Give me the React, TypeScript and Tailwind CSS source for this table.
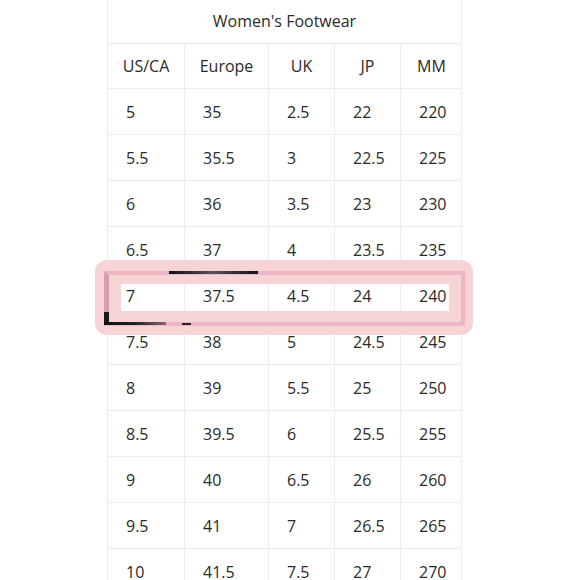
import React from 'react'

const headers = ['US/CA', 'Europe', 'UK', 'JP', 'MM']

const rows: string[][] = [
  ['5', '35', '2.5', '22', '220'],
  ['5.5', '35.5', '3', '22.5', '225'],
  ['6', '36', '3.5', '23', '230'],
  ['6.5', '37', '4', '23.5', '235'],
  ['7', '37.5', '4.5', '24', '240'],
  ['7.5', '38', '5', '24.5', '245'],
  ['8', '39', '5.5', '25', '250'],
  ['8.5', '39.5', '6', '25.5', '255'],
  ['9', '40', '6.5', '26', '260'],
  ['9.5', '41', '7', '26.5', '265'],
  ['10', '41.5', '7.5', '27', '270'],
]

const cols = 'grid grid-cols-[76px_84px_66px_66px_62px]'

// pink marker drawn over the size 7 row
const Highlight = () => (
  <div className="absolute z-10 -left-[13px] -top-[13px] w-[378px] h-[75px] pointer-events-none">
    <div className="absolute inset-0 rounded-[12px] border-solid border-[#f6d4d5] border-l-[26px] border-r-[24px] border-t-[24px] border-b-[24px]" />
    <div className="absolute left-[9px] top-[11px] w-[361px] h-[55px] border-[4px] border-l-[5px] border-[#eeb5c6] border-l-[#d99cb0]" />
    <div className="absolute left-[74px] top-[11px] w-[89px] h-[3px] bg-gradient-to-r from-[#111] via-[#555] to-[#111]" />
    <div className="absolute left-[9px] top-[52px] w-[5px] h-[13px] bg-[#1a1a1a]" />
    <div className="absolute left-[9px] top-[62px] w-[62px] h-[3px] bg-gradient-to-r from-[#111] via-[#222] to-[#8a6a70]" />
    <div className="absolute left-[87px] top-[63px] w-[9px] h-[2px] bg-[#2a2020]" />
  </div>
)

export default function App() {
  return (
    <div className="w-[580px] h-[580px] overflow-hidden bg-white text-[#2a2a2a] text-[16px] font-['Open_Sans',sans-serif]">
      <div className="pl-[107px]">
        <div className="w-[355px] border-x border-[#ececec]">
          <div className="h-[44px] flex items-center justify-center border-b border-[#ececec] pb-[2px]">
            Women's Footwear
          </div>
          <div className={`${cols} h-[45px] border-b border-[#ececec]`}>
            {headers.map((h, i) => (
              <div key={h} className={`flex items-center justify-center ${i > 0 ? 'border-l border-[#ececec]' : ''}`}>
                {h}
              </div>
            ))}
          </div>
          {rows.map((r) => (
            <div key={r[0]} className={`relative ${cols} h-[46px] border-b border-[#ececec]`}>
              {r.map((c, i) => (
                <div key={i} className={`flex items-center pl-[18px] ${i > 0 ? 'border-l border-[#ececec]' : ''}`}>
                  {c}
                </div>
              ))}
              {r[0] === '7' && <Highlight />}
            </div>
          ))}
        </div>
      </div>
    </div>
  )
}
